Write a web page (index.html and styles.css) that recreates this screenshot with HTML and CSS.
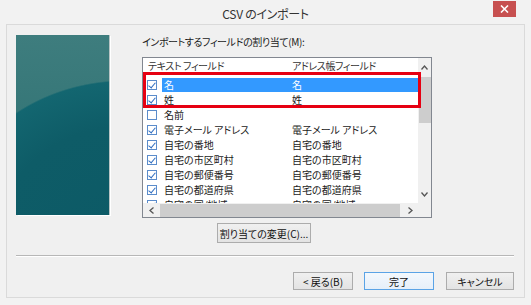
FILE: index.html
```html
<!DOCTYPE html>
<html lang="ja">
<head>
  <meta charset="UTF-8" />
  <title>CSV のインポート</title>
  <link rel="stylesheet" href="styles.css">
</head>
<body>
  <div class="window">
    <div class="titlebar">
      <span class="title">CSV のインポート</span>
      <button class="close" type="button" aria-label="閉じる">
        <svg width="9" height="8" viewBox="0 0 9 8"><path d="M1 0.5 L8 7.5 M8 0.5 L1 7.5" stroke="#fff" stroke-width="1.6"/></svg>
      </button>
    </div>

    <div class="client">
      <div class="main">
        <div class="banner"></div>
        <div class="content">
          <label class="caption">インポートするフィールドの割り当て(M):</label>
          <div class="listbox">
            <div class="list">
              <div class="header"><span class="h1">テキスト フィールド</span><span>アドレス帳フィールド</span></div>
              <div class="row sel"><span class="cb on"></span><span class="c1">名</span><span class="c2">名</span></div>
              <div class="row"><span class="cb on"></span><span class="c1">姓</span><span class="c2">姓</span></div>
              <div class="row"><span class="cb"></span><span class="c1">名前</span><span class="c2"></span></div>
              <div class="row"><span class="cb on"></span><span class="c1">電子メール アドレス</span><span class="c2">電子メール アドレス</span></div>
              <div class="row"><span class="cb on"></span><span class="c1">自宅の番地</span><span class="c2">自宅の番地</span></div>
              <div class="row"><span class="cb on"></span><span class="c1">自宅の市区町村</span><span class="c2">自宅の市区町村</span></div>
              <div class="row"><span class="cb on"></span><span class="c1">自宅の郵便番号</span><span class="c2">自宅の郵便番号</span></div>
              <div class="row"><span class="cb on"></span><span class="c1">自宅の都道府県</span><span class="c2">自宅の都道府県</span></div>
              <div class="row"><span class="cb on"></span><span class="c1">自宅の国/地域</span><span class="c2">自宅の国/地域</span></div>
            </div>
            <div class="vscroll">
              <span class="arrow"><svg width="7" height="5" viewBox="0 0 7 5"><path d="M0.5 4.5 L3.5 1 L6.5 4.5" fill="none" stroke="#555" stroke-width="1.3"/></svg></span>
              <span class="vthumb"></span>
              <span class="spacer"></span>
              <span class="arrow"><svg width="7" height="5" viewBox="0 0 7 5"><path d="M0.5 0.5 L3.5 4 L6.5 0.5" fill="none" stroke="#555" stroke-width="1.3"/></svg></span>
            </div>
            <div class="hscroll">
              <span class="harrow"><svg width="5" height="7" viewBox="0 0 5 7"><path d="M4.5 0.5 L1 3.5 L4.5 6.5" fill="none" stroke="#555" stroke-width="1.3"/></svg></span>
              <span class="hthumb"></span>
              <span class="spacer"></span>
              <span class="harrow"><svg width="5" height="7" viewBox="0 0 5 7"><path d="M0.5 0.5 L4 3.5 L0.5 6.5" fill="none" stroke="#555" stroke-width="1.3"/></svg></span>
            </div>
            <div class="corner"></div>
            <div class="mark"></div>
          </div>
          <button class="btn change" type="button">割り当ての変更(C)...</button>
        </div>
      </div>

      <div class="sep"></div>

      <div class="actions">
        <button class="btn back" type="button">&lt; 戻る(B)</button>
        <button class="btn finish" type="button">完了</button>
        <button class="btn cancel" type="button">キャンセル</button>
      </div>
    </div>
  </div>
</body>
</html>
```

FILE: styles.css
```css
* { box-sizing: border-box; }
body { margin: 0; background: #f0f0f0; font-family: "Noto Sans CJK JP", "Noto Sans", sans-serif; font-feature-settings: "palt"; color: #1a1a1a; }

.window { width: 531px; height: 305px; position: relative; background: #f2f2f2; }
.titlebar { height: 24px; display: flex; align-items: center; justify-content: center; }
.title { font-size: 12px; color: #333; padding-top: 2px; letter-spacing: -0.3px; }
.close { position: absolute; top: 1px; right: 15px; width: 23px; height: 16px; border: none; background: #c75050; padding: 0; display: flex; align-items: center; justify-content: center; }

.client { margin: 0 6px; height: 274px; border: 1px solid #dadada; background: #f0f0f0; padding: 10px 10px 0 9px; }
.main { display: flex; gap: 33px; }
.banner { width: 93px; height: 180px; flex: none;
  background:
    radial-gradient(ellipse 180px 155px at 110px 200px, #0c5a66 0%, #0e5c67 70%, #136670 99%, transparent 100%),
    linear-gradient(#3e7d7e, #2c6f70);
  box-shadow: 1px 0 0 #b9c4c4, 2px 1px 0 #fff; }

.content { display: flex; flex-direction: column; align-items: flex-start; }
.caption { font-size: 10px; line-height: 14px; margin-bottom: 8px; letter-spacing: -0.4px; }

.listbox { position: relative; width: 290px; height: 161px; border: 1px solid #828790; background: #fff;
  display: grid; grid-template-columns: 1fr 13px; grid-template-rows: 1fr 14px; }
.list { overflow: hidden; font-size: 10px; }
.header { height: 19px; display: flex; align-items: flex-start; padding: 1px 0 0 5px; line-height: 14px; color: #333; letter-spacing: -0.4px; }
.h1 { width: 144px; }
.row { height: 15px; display: flex; align-items: center; padding-left: 4px; }
.cb { width: 10px; height: 10px; border: 1px solid #5b8ccb; background: #fff; margin-right: 5px; flex: none; position: relative; }
.cb.on::after { content: ""; position: absolute; left: 2px; top: 0px; width: 3px; height: 6px; border: solid #2d6cc0; border-width: 0 1.5px 1.5px 0; transform: rotate(40deg); }
.c1 { width: 130px; padding-left: 2px; line-height: 14px; white-space: nowrap; }
.c2 { flex: 1; line-height: 14px; white-space: nowrap; }
.sel .c1, .sel .c2 { background: #3399ff; color: #fff; }

.vscroll { display: flex; flex-direction: column; align-items: center; background: #f0f0f0; }
.arrow { height: 18px; display: flex; align-items: center; justify-content: center; }
.vthumb { width: 12px; height: 46px; background: #cdcdcd; margin-top: 1px; }
.spacer { flex: 1; }
.hscroll { display: flex; align-items: center; background: #f0f0f0; }
.harrow { width: 16px; display: flex; justify-content: center; }
.hthumb { width: 240px; height: 13px; background: #cdcdcd; margin-left: 1px; }
.corner { background: #f0f0f0; }
.mark { position: absolute; left: 0; top: 14px; width: 278px; height: 36px; border: 3px solid #e60012; }

.btn { font-family: inherit; font-feature-settings: "palt"; font-size: 10px; color: #111; background: linear-gradient(#f0f0f0, #e3e3e3); border: 1px solid #acacac; padding: 0; }
.change { width: 94px; height: 20px; margin: 5px 0 0 75px; }

.sep { height: 1px; background: #b7b7b7; border-bottom: 1px solid #fff; margin: 12px 0 15px; box-sizing: content-box; }
.actions { display: flex; justify-content: flex-end; }
.btn.back, .btn.finish, .btn.cancel { height: 18px; }
.back { width: 60px; margin-right: 11px; }
.finish { width: 70px; margin-right: 12px; border-color: #5aa3e6; background: linear-gradient(#f3f8fd, #e6eff9); }
.cancel { width: 68px; }
```
